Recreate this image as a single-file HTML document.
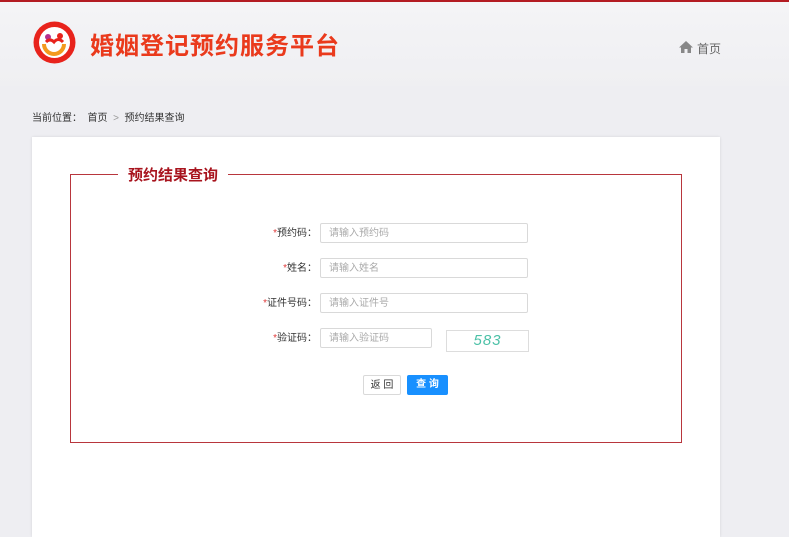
<!DOCTYPE html><html><head><meta charset="utf-8"><style>
body{margin:0;width:789px;height:534px;overflow:hidden;background:#eeeef2;font-family:"Liberation Sans","Noto Sans CJK SC",sans-serif;position:relative}
.a{position:absolute}
.hdr{left:0;top:0;width:789px;height:86px;background:linear-gradient(#f4f4f6,#efeff2);border-top:2px solid #b31b22;box-sizing:border-box}
.lab{font-size:10px;color:#333;text-align:right;width:120px;left:197px;line-height:12px}
.lab i{color:#e03a3a;font-style:normal}
.inp{left:320px;width:208px;height:20px;border:1px solid #d9d9d9;border-radius:2px;box-sizing:border-box;background:#fff;font-size:10px;color:#aaa;padding:4px 0 0 8px;line-height:12px}
</style></head><body>
<div class="a hdr"></div>
<svg class="a" style="left:32px;top:20px" width="45" height="45" viewBox="0 0 45 45"><circle cx="22.5" cy="22.5" r="21" fill="#e8231c"/><circle cx="22.5" cy="22.5" r="15.5" fill="#fff"/><path d="M12 24a10 10 0 0 0 20 0" stroke="#f39a1e" stroke-width="4" fill="none"/><circle cx="16" cy="17" r="3" fill="#b5308f"/><circle cx="28" cy="16" r="3" fill="#e8231c"/><path d="M14 22q4-4 8 0q4-5 9 0" stroke="#e8231c" stroke-width="3" fill="none"/></svg>
<div class="a" style="left:90px;top:26px;font-size:24px;font-weight:bold;color:#ea3a1c;letter-spacing:1px">婚姻登记预约服务平台</div>
<svg class="a" style="left:679px;top:40px" width="14" height="14" viewBox="0 0 14 14"><path d="M7 1L0 7.5h2V13h3.5V9h3v4H12V7.5h2z" fill="#888"/></svg>
<div class="a" style="left:697px;top:40px;font-size:12px;color:#666">首页</div>
<div class="a" style="left:32px;top:109px;font-size:10px;color:#333">当前位置：&nbsp;&nbsp;首页&nbsp;&nbsp;<span style="color:#999">&gt;</span>&nbsp;&nbsp;预约结果查询</div>
<div class="a" style="left:32px;top:137px;width:688px;height:400px;background:#fff;box-shadow:0 0 3px rgba(0,0,0,.1)"></div>
<div class="a" style="left:70px;top:174px;width:612px;height:269px;border:1px solid #b8363d;box-sizing:border-box"></div>
<div class="a" style="left:118px;top:164px;padding:0 10px;background:#fff;font-size:15px;font-weight:bold;color:#a8141e">预约结果查询</div>
<div class="a lab" style="top:228px"><i>*</i>预约码：</div><div class="a inp" style="top:223px">请输入预约码</div>
<div class="a lab" style="top:263px"><i>*</i>姓名：</div><div class="a inp" style="top:258px">请输入姓名</div>
<div class="a lab" style="top:298px"><i>*</i>证件号码：</div><div class="a inp" style="top:293px">请输入证件号</div>
<div class="a lab" style="top:333px"><i>*</i>验证码：</div><div class="a inp" style="top:328px;width:112px">请输入验证码</div>
<div class="a" style="left:446px;top:330px;width:83px;height:22px;border:1px solid #ddd;box-sizing:border-box;text-align:center;font-size:15px;font-style:italic;color:#4cc1a7;line-height:20px;letter-spacing:1px">583</div>
<div class="a" style="left:363px;top:375px;width:38px;height:20px;border:1px solid #d9d9d9;border-radius:2px;box-sizing:border-box;font-size:10px;text-align:center;padding-top:4px;line-height:12px;color:#333">返 回</div>
<div class="a" style="left:407px;top:375px;width:41px;height:20px;background:#1890ff;border-radius:2px;font-size:10px;text-align:center;box-sizing:border-box;padding-top:4px;line-height:12px;color:#fff;font-weight:bold">查 询</div>
</body></html>
